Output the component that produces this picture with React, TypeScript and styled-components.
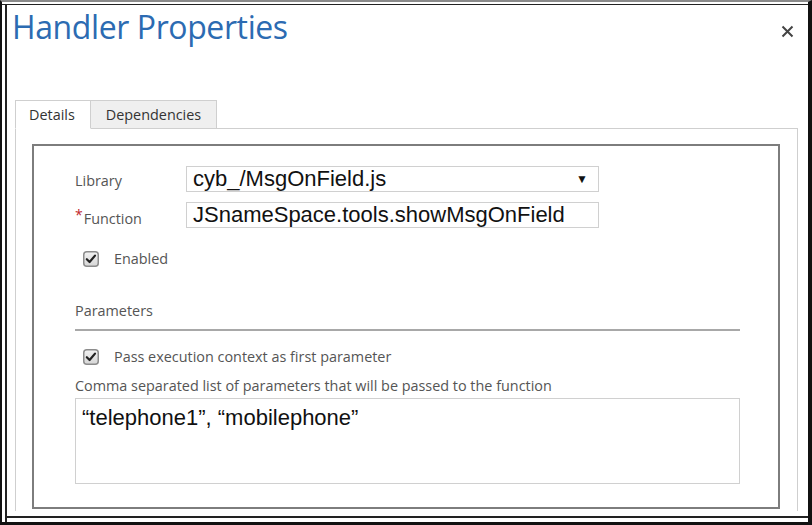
import styled, { createGlobalStyle } from "styled-components";

const GlobalStyle = createGlobalStyle`
  html, body {
    margin: 0;
    padding: 0;
    background: #ffffff;
  }
  * {
    box-sizing: border-box;
  }
`;

const Frame = styled.div`
  width: 812px;
  height: 525px;
  background: #fff;
  border-top: 2px solid #8a8a8a;
  border-left: 2px solid #111;
  border-bottom: 3px solid #111;
  border-right: 4px solid #111;
  box-shadow: inset 0 2px 0 0 #fff, inset 0 3px 0 0 #222, inset 3px 0 0 0 #fff,
    inset 5px 0 0 0 #222, inset 0 -4px 0 0 #fff, inset 0 -6px 0 0 #222;
  padding: 6px 11px 0 13px;
  display: flex;
  flex-direction: column;
  font-family: "Open Sans", "Noto Sans", sans-serif;
`;

const Header = styled.div`
  display: flex;
  justify-content: space-between;
  align-items: flex-start;
  height: 92px;
`;

const Title = styled.h1`
  margin: -3px 0 0 -3px;
  font-size: 32px;
  font-weight: 400;
  letter-spacing: -0.4px;
  color: #2c6bb2;
  line-height: 44px;
`;

const Close = styled.button`
  border: none;
  background: transparent;
  padding: 0;
  margin: 15px 2px 0 0;
  width: 16px;
  height: 16px;
  display: flex;
  align-items: center;
  justify-content: center;
  cursor: pointer;
`;

const Tabs = styled.div`
  display: flex;
  margin-left: 0;
  position: relative;
  z-index: 1;
`;

const Tab = styled.div<{ active?: boolean }>`
  height: 29px;
  padding: ${(p) => (p.active ? "0 15px 0 13px" : "0 15px")};
  display: flex;
  align-items: center;
  font-size: 14.4px;
  color: #333;
  background: ${(p) => (p.active ? "#fff" : "#efefef")};
  border: 1px solid #cfcfcf;
  border-bottom: ${(p) => (p.active ? "1px solid #fff" : "1px solid #cfcfcf")};
  border-left: ${(p) => (p.active ? "1px solid #cfcfcf" : "none")};
`;

const Panel = styled.div`
  margin-top: -1px;
  width: 783px;
  height: 383px;
  border: 1px solid #cfcfcf;
  border-bottom: none;
  padding: 15px 17px 0 16px;
`;

const Box = styled.div`
  border: 2px solid #7d7d7d;
  height: 365px;
  padding: 20px 38px 0 41px;
  display: flex;
  flex-direction: column;
`;

const FieldRow = styled.div<{ gap?: number }>`
  display: flex;
  align-items: center;
  margin-top: ${(p) => p.gap ?? 0}px;
`;

const Label = styled.div`
  width: 111px;
  font-size: 14.4px;
  color: #555;
  padding-top: 3px;
`;

const Required = styled.span`
  color: #c0282c;
  font-size: 14px;
  vertical-align: 4px;
  margin-right: 1px;
`;

const Field = styled.div`
  width: 413px;
  height: 26px;
  border: 1px solid #d0d0d0;
  display: flex;
  align-items: center;
  justify-content: space-between;
  padding: 0 10px 0 6px;
  font-family: "Liberation Sans", Arial, sans-serif;
  font-size: 22px;
  color: #111;
`;

const Arrow = styled.span`
  font-size: 12px;
  color: #111;
`;

const CheckRow = styled.label<{ gap?: number }>`
  display: flex;
  align-items: center;
  margin: ${(p) => p.gap ?? 0}px 0 0 8px;
  font-size: 14.4px;
  color: #555;
  gap: 15px;
`;

const Section = styled.div`
  margin-top: 33px;
  font-size: 14.4px;
  color: #555;
  padding-bottom: 9px;
  border-bottom: 2px solid #a8a8a8;
`;

const Hint = styled.div`
  margin-top: 10px;
  font-size: 14.4px;
  color: #555;
`;

const TextArea = styled.div`
  margin-top: 3px;
  height: 86px;
  border: 1px solid #d0d0d0;
  padding: 6px 6px;
  font-family: "Liberation Sans", Arial, sans-serif;
  font-size: 22px;
  color: #111;
`;

function Check() {
  return (
    <svg width="16" height="16" viewBox="0 0 16 16">
      <defs>
        <linearGradient id="cb" x1="0" y1="0" x2="0" y2="1">
          <stop offset="0" stopColor="#f2f2f2" />
          <stop offset="1" stopColor="#d6d6d6" />
        </linearGradient>
      </defs>
      <rect x="0.75" y="0.75" width="14.5" height="14.5" rx="3" fill="url(#cb)" stroke="#8c8c8c" strokeWidth="1.5" />
      <path d="M3.8 8.2 L6.6 11 L12 4.6" fill="none" stroke="#222" strokeWidth="2.2" strokeLinecap="round" strokeLinejoin="round" />
    </svg>
  );
}

export default function App() {
  return (
    <>
      <GlobalStyle />
      <Frame>
        <Header>
          <Title>Handler Properties</Title>
          <Close aria-label="Close">
            <svg width="13" height="13" viewBox="0 0 13 13">
              <path d="M1.5 1.5 L11.5 11.5 M11.5 1.5 L1.5 11.5" stroke="#444" strokeWidth="2" />
            </svg>
          </Close>
        </Header>
        <Tabs>
          <Tab active>Details</Tab>
          <Tab>Dependencies</Tab>
        </Tabs>
        <Panel>
          <Box>
            <FieldRow>
              <Label>Library</Label>
              <Field>
                <span>cyb_/MsgOnField.js</span>
                <Arrow>▼</Arrow>
              </Field>
            </FieldRow>
            <FieldRow gap={10}>
              <Label>
                <Required>*</Required>Function
              </Label>
              <Field>
                <span>JSnameSpace.tools.showMsgOnField</span>
              </Field>
            </FieldRow>
            <CheckRow gap={21}>
              <Check />
              Enabled
            </CheckRow>
            <Section>Parameters</Section>
            <CheckRow gap={16}>
              <Check />
              Pass execution context as first parameter
            </CheckRow>
            <Hint>Comma separated list of parameters that will be passed to the function</Hint>
            <TextArea>“telephone1”, “mobilephone”</TextArea>
          </Box>
        </Panel>
      </Frame>
    </>
  );
}
